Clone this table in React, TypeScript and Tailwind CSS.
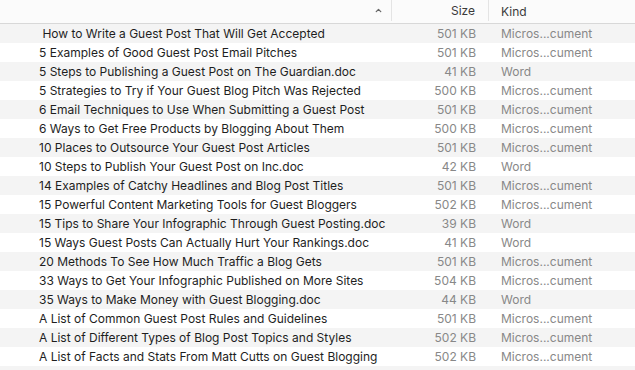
import { ChevronUp } from 'lucide-react';

const files: [string, string, string][] = [
  [' How to Write a Guest Post That Will Get Accepted', '501 KB', 'Micros...cument'],
  ['5 Examples of Good Guest Post Email Pitches', '501 KB', 'Micros...cument'],
  ['5 Steps to Publishing a Guest Post on The Guardian.doc', '41 KB', 'Word'],
  ['5 Strategies to Try if Your Guest Blog Pitch Was Rejected', '500 KB', 'Micros...cument'],
  ['6 Email Techniques to Use When Submitting a Guest Post', '501 KB', 'Micros...cument'],
  ['6 Ways to Get Free Products by Blogging About Them', '500 KB', 'Micros...cument'],
  ['10 Places to Outsource Your Guest Post Articles', '501 KB', 'Micros...cument'],
  ['10 Steps to Publish Your Guest Post on Inc.doc', '42 KB', 'Word'],
  ['14 Examples of Catchy Headlines and Blog Post Titles', '501 KB', 'Micros...cument'],
  ['15 Powerful Content Marketing Tools for Guest Bloggers', '502 KB', 'Micros...cument'],
  ['15 Tips to Share Your Infographic Through Guest Posting.doc', '39 KB', 'Word'],
  ['15 Ways Guest Posts Can Actually Hurt Your Rankings.doc', '41 KB', 'Word'],
  ['20 Methods To See How Much Traffic a Blog Gets', '501 KB', 'Micros...cument'],
  ['33 Ways to Get Your Infographic Published on More Sites', '504 KB', 'Micros...cument'],
  ['35 Ways to Make Money with Guest Blogging.doc', '44 KB', 'Word'],
  ['A List of Common Guest Post Rules and Guidelines', '501 KB', 'Micros...cument'],
  ['A List of Different Types of Blog Post Topics and Styles', '502 KB', 'Micros...cument'],
  ['A List of Facts and Stats From Matt Cutts on Guest Blogging', '502 KB', 'Micros...cument'],
];

export default function App() {
  return (
    <div
      className="w-[635px] h-[370px] overflow-hidden bg-white text-[12px] leading-[19px]"
      style={{ fontFamily: 'Inter, "Liberation Sans", sans-serif' }}
    >
      {/* header */}
      <div className="grid grid-cols-[392px_97px_146px] h-[24px] bg-[#fbfbfb] border-b border-[#d8d8d8] text-[#3a3a3a]">
        <div className="flex items-center justify-end pr-[8px] border-r border-[#e4e4e4] mb-[2px]">
          <ChevronUp className="w-[9px] h-[9px] text-[#666]" strokeWidth={3.5} />
        </div>
        <div className="flex items-center justify-end pr-[13px] border-r border-[#e4e4e4] mb-[2px]">Size</div>
        <div className="flex items-center pl-[12px]">Kind</div>
      </div>

      {/* rows */}
      {files.map(([name, size, kind], i) => (
        <div
          key={name}
          className={`grid grid-cols-[392px_97px_146px] h-[19px] ${i % 2 === 0 ? 'bg-[#f4f4f4]' : 'bg-white'}`}
        >
          <div className="pl-[39px] text-[#1e1e1e] whitespace-pre overflow-hidden">{name}</div>
          <div className="pr-[13px] text-right text-[#888]">{size}</div>
          <div className="pl-[12px] text-[#888]">{kind}</div>
        </div>
      ))}
      <div className="h-[19px] bg-[#f4f4f4]" />
    </div>
  );
}
